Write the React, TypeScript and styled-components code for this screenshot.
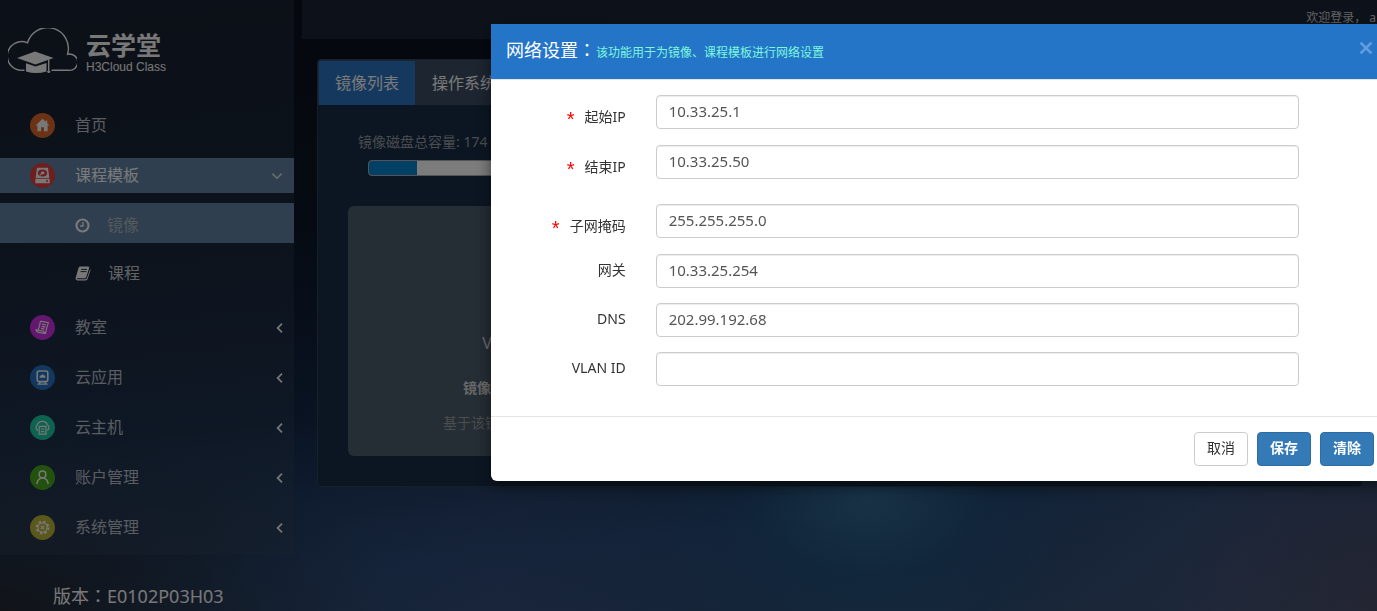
import React from "react";
import styled, { createGlobalStyle } from "styled-components";

const GlobalStyle = createGlobalStyle`
  *, *::before, *::after { box-sizing: border-box; }
  body {
    margin: 0;
    overflow: hidden;
    font-family: "Noto Sans", "Noto Sans CJK SC", sans-serif;
    font-size: 14px;
    line-height: 20px;
    background: #0c1424;
  }
  button, input { font-family: inherit; }
  ul { list-style: none; margin: 0; padding: 0; }
  h1, h2, p { margin: 0; font-weight: 400; }
`;

/* ---------- page frame ---------- */

const Page = styled.div`
  display: flex;
  align-items: flex-start;
  gap: 8px;
  min-height: 100vh;
  overflow: hidden;
  background:
    radial-gradient(ellipse 120px 80px at 63% 81%, rgba(70, 124, 160, 0.5), rgba(70, 124, 160, 0)),
    radial-gradient(ellipse 200px 200px at 63% 84%, rgba(20, 96, 140, 0.4), rgba(20, 96, 140, 0)),
    radial-gradient(ellipse 240px 220px at 102% 100%, rgba(84, 72, 92, 0.65), rgba(84, 72, 92, 0)),
    radial-gradient(ellipse 260px 300px at 90% 96%, rgba(76, 88, 124, 0.45), rgba(76, 88, 124, 0)),
    radial-gradient(ellipse 300px 240px at 36% 96%, rgba(60, 80, 130, 0.4), rgba(60, 80, 130, 0)),
    radial-gradient(ellipse 400px 180px at 0% 100%, rgba(34, 34, 38, 0.85), rgba(34, 34, 38, 0)),
    linear-gradient(174deg, #0a0f1a 0%, #0c1524 32%, #122644 60%, #24446e 80%, #324c70 100%);
`;

const SideColumn = styled.div`
  flex: 0 0 294px;
`;

const Sidebar = styled.aside`
  padding: 28px 0 10px;
  background: rgba(50, 66, 90, 0.36);
`;

const Brand = styled.div`
  display: flex;
  gap: 9px;
  padding-left: 8px;
  height: 80px;
  color: #f0f0f0;
`;

const BrandText = styled.div`
  padding-top: 4px;
`;

const BrandName = styled.div`
  font-family: "Liberation Sans", "Noto Sans CJK SC", sans-serif;
  font-size: 25px;
  line-height: 28px;
  font-weight: 700;
`;

const BrandSub = styled.div`
  font-family: "Liberation Sans", sans-serif;
  font-size: 12px;
  line-height: 14px;
`;

const Menu = styled.ul`
  display: flex;
  flex-direction: column;
  gap: 15px;
`;

const MenuLink = styled.a<{ $open?: boolean }>`
  display: flex;
  align-items: center;
  height: 35px;
  padding: 0 9px 0 30px;
  font-size: 16px;
  text-decoration: none;
  color: ${(p) => (p.$open ? "#f4f4f4" : "#b4b9c2")};
  background: ${(p) => (p.$open ? "#5f7f9f" : "transparent")};
`;

const Disc = styled.span<{ $color: string }>`
  display: flex;
  align-items: center;
  justify-content: center;
  width: 25px;
  height: 25px;
  margin-right: 20px;
  border-radius: 50%;
  background: ${(p) => p.$color};
`;

const MenuText = styled.span`
  flex: 1;
  padding-bottom: 2px;
`;

const SubMenu = styled.ul`
  display: flex;
  flex-direction: column;
  gap: 8px;
  padding: 10px 0 4px;
`;

const SubLink = styled.a<{ $active?: boolean }>`
  display: flex;
  align-items: center;
  gap: 17px;
  height: 40px;
  padding: 4px 0 0 75px;
  font-size: 16px;
  text-decoration: none;
  color: ${(p) => (p.$active ? "#aab2ba" : "#c4c6ca")};
  background: ${(p) => (p.$active ? "#5f7f9f" : "transparent")};
`;

const Version = styled.p`
  padding: 27px 0 0 53px;
  font-size: 18px;
  line-height: 28px;
  color: #f0f0f0;
`;

/* full-width punctuation centred in its square */
const Colon = styled.span`
  font-family: "Noto Sans CJK TC", sans-serif;
  line-height: 18px;
`;

const Main = styled.div`
  flex: 1;
  min-width: 0;
`;

const TopBar = styled.header`
  display: flex;
  justify-content: flex-end;
  height: 39px;
  padding: 8px 1px 0 0;
  font-size: 12px;
  color: #c8c8c8;
  background: rgba(56, 68, 92, 0.36);
`;

const Panel = styled.section`
  margin: 20px 15px 0;
  height: 428px;
  border: 1px solid #2e3e50;
  border-radius: 4px;
  overflow: hidden;
  background: #182c46;
`;

const Tabs = styled.div`
  display: flex;
  gap: 1px;
  height: 45px;
  padding: 1px 1px 0;
  background: #3a4a60;
`;

const Tab = styled.button<{ $active?: boolean }>`
  padding: 0 16px 3px;
  border: 0;
  font-size: 16px;
  color: #f4f4f4;
  background: ${(p) => (p.$active ? "#2a70bc" : "transparent")};
`;

const Capacity = styled.div`
  padding: 27px 30px 0 40px;
  color: #94989e;
`;

const Meter = styled.div`
  height: 16px;
  margin: 8px 0 0 10px;
  border: 1px solid #a4a8ac;
  border-radius: 4px;
  overflow: hidden;
  background: #f8f8f8;
`;

const MeterFill = styled.div`
  width: 48px;
  height: 100%;
  background: #0780cc;
`;

const ImageCard = styled.article`
  width: 316px;
  height: 250px;
  margin: 30px 0 0 30px;
  padding-top: 126px;
  border-radius: 6px;
  text-align: center;
  background: #4a5a6a;
`;

const CardName = styled.h2`
  font-size: 16px;
  line-height: 22px;
  color: #d4d4d4;
`;

const CardSize = styled.p`
  padding-top: 24px;
  font-weight: 700;
  color: #d0d0d0;
`;

const CardNote = styled.p`
  padding-top: 15px;
  color: #989c9e;
`;

/* ---------- dialog ---------- */

const Backdrop = styled.div`
  position: fixed;
  inset: 0;
  display: flex;
  align-items: flex-start;
  padding: 24px 0 0 491px;
  overflow: hidden;
  background: rgba(0, 0, 0, 0.5);
`;

const Dialog = styled.div`
  flex: 0 0 898px;
  border-radius: 0 0 6px 6px;
  background: #fff;
  box-shadow: 0 5px 15px rgba(0, 0, 0, 0.5);
`;

const DialogHeader = styled.header`
  display: flex;
  align-items: baseline;
  height: 56px;
  padding: 13px 16px 0 15px;
  border-bottom: 1px solid #e5e5e5;
  background: #2474c8;
`;

const DialogTitle = styled.h1`
  font-size: 18px;
  line-height: 26px;
  color: #fff;
`;

const DialogHint = styled.p`
  flex: 1;
  font-size: 12px;
  color: #7cf8dc;
`;

const CloseButton = styled.button`
  align-self: flex-start;
  padding: 5px 0 0;
  border: 0;
  background: none;
  color: #5f9ddc;

  svg { display: block; }
`;

const DialogBody = styled.div`
  padding: 15px;
`;

const FieldGroup = styled.div`
  padding-bottom: 9px;
`;

const FieldRow = styled.div`
  display: grid;
  grid-template-columns: 2fr 9fr 1fr;
  align-items: start;
  margin: 0 -15px 15px;
`;

const FieldLabel = styled.label<{ $required?: boolean }>`
  display: flex;
  justify-content: flex-end;
  height: ${(p) => (p.$required ? 35 : 34)}px;
  padding: ${(p) => (p.$required ? 12 : 6)}px 15px 0 0;
  color: #333;
`;

const Star = styled.span`
  margin-right: 10px;
  font-family: "Liberation Sans", sans-serif;
  font-size: 20px;
  line-height: 24px;
  color: #f00;
`;

const FieldCell = styled.div`
  padding: 0 15px;
`;

const TextInput = styled.input`
  display: block;
  width: 100%;
  height: 34px;
  padding: 5px 12px 7px;
  border: 1px solid #ccc;
  border-radius: 4px;
  font-size: 15px;
  line-height: 20px;
  color: #555;
  background: #fff;
  box-shadow: inset 0 1px 1px rgba(0, 0, 0, 0.075);
`;

const DialogFooter = styled.footer`
  display: flex;
  justify-content: flex-end;
  gap: 9px;
  padding: 15px;
  border-top: 1px solid #e5e5e5;
`;

const Button = styled.button<{ $primary?: boolean }>`
  width: 54px;
  height: 34px;
  padding: 0 0 4px;
  border: 1px solid ${(p) => (p.$primary ? "#2e6da4" : "#ccc")};
  border-radius: 4px;
  font-size: 14px;
  font-weight: ${(p) => (p.$primary ? 700 : 400)};
  color: ${(p) => (p.$primary ? "#fff" : "#333")};
  background: ${(p) => (p.$primary ? "#337ab7" : "#fff")};
`;

/* ---------- drawings ---------- */

const Logo = () => (
  <svg width="69" height="46" viewBox="0 0 69 46" fill="none" stroke="currentColor" strokeWidth="1.4">
    <path d="M16.5 42.3H15A14.4 14.4 0 1 1 19.5 14.8A20.7 20.7 0 0 1 59.6 26.2A8.2 8.2 0 1 1 60.5 42.3H43.5" />
    <path d="M9 30L27 23.6L45.5 30L27.5 36.4Z" fill="currentColor" stroke="none" />
    <path d="M18 35.2L27.5 38.6L38.5 35V43.6Q28 46.6 18 43.6Z" fill="currentColor" stroke="none" />
    <path d="M40.7 31.5V45M39.2 43.8H42.2" />
  </svg>
);

const iconProps = {
  width: 17,
  height: 17,
  viewBox: "0 0 17 17",
  fill: "none",
  stroke: "#f0f0f0",
  strokeWidth: 1.2,
} as const;

const HomeIcon = () => (
  <svg {...iconProps}>
    <path
      d="M8.5 1.8L1.6 8.4H3.4V14.2H7V10.2H10V14.2H13.6V8.4H15.4L13.2 6.3V3.4H11.6V4.8Z"
      fill="#f0f0f0"
      stroke="none"
    />
  </svg>
);

const DiskIcon = () => (
  <svg {...iconProps}>
    <path d="M3 .8H14L15.4 11.2H1.6ZM1.3 12H15.7V16.2H1.3Z" fill="#f0f0f0" stroke="none" />
    <ellipse cx="8.5" cy="6" rx="4.6" ry="3.5" fill="#dc3c3c" stroke="none" />
    <ellipse cx="8.7" cy="5.9" rx="1.9" ry="1.3" fill="#f0f0f0" stroke="none" />
    <path d="M5.6 8.4L8 6.4" />
    <circle cx="13" cy="14.1" r="1" fill="#dc3c3c" stroke="none" />
  </svg>
);

const ScrollIcon = () => (
  <svg {...iconProps}>
    <path d="M6.4 2.2L14.4 3.6Q12.4 9 11.6 14.4M6.4 2.2Q5.8 7 4.2 10.6M2 10.8L9.8 12.2Q9.8 14.2 11.6 14.6L4.6 13.4Q2.4 12.8 2 10.8Z" />
    <path d="M8 5.2L12 6M7.6 7.4L11.4 8.2M7 9.4L10.4 10.2" />
  </svg>
);

const ScreenIcon = () => (
  <svg {...iconProps}>
    <rect x="3.2" y="2" width="10.6" height="10.6" rx="2" strokeWidth="1.6" />
    <path d="M5.6 8.8H11.4V7.2Q10.8 6.2 10 6.4Q8.6 4.2 7.2 6.2Q5.6 6.4 5.6 7.6Z" fill="#f0f0f0" stroke="none" />
    <path d="M6.4 13L5 14.6M10.6 13L12 14.6M3.4 15.2H13.6" />
  </svg>
);

const CloudHostIcon = () => (
  <svg {...iconProps}>
    <path d="M4 11.6A3.4 3.4 0 0 1 3.4 5.8A5.2 4.6 0 0 1 13.4 5.8A3.4 3.4 0 0 1 13.2 11.6" />
    <path d="M5.2 7.4H12V15.2H5.2ZM7 10H10.2M7 12.6H10.2" />
  </svg>
);

const UserIcon = () => (
  <svg {...iconProps} strokeWidth={1.5}>
    <circle cx="8.5" cy="5.4" r="3.3" />
    <path d="M2.8 15Q3.4 9.6 8.5 8.8Q13.6 9.6 14.2 15" />
  </svg>
);

const GearIcon = () => (
  <svg {...iconProps}>
    <circle cx="8.5" cy="8.5" r="4.6" />
    <circle cx="8.5" cy="8.5" r="5.9" strokeWidth="2" strokeDasharray="2.4 2.23" />
    <path d="M6.8 6.8L10.2 10.2M10.2 6.8L6.8 10.2" />
  </svg>
);

const ClockIcon = () => (
  <svg width="15" height="15" viewBox="0 0 15 15" fill="none" stroke="#f0f0f0">
    <circle cx="7.5" cy="7.5" r="6" strokeWidth="2.2" />
    <path d="M8 4V8H5" strokeWidth="1.4" />
  </svg>
);

const BookIcon = () => (
  <svg width="16" height="15" viewBox="0 0 16 15" fill="none">
    <path
      d="M5 .6H13.4Q14.4 .8 14.2 1.8L11.2 11.2Q10.8 12.2 9.8 12.2H2.2Q1.4 12.8 2.4 13.2H10.6Q11.6 13 12 12L15 3.2Q15.8 3.6 15.4 4.6L12.6 13Q12 14.4 10.8 14.4H2.2Q.2 14 .6 12L3.6 1.8Q4 .8 5 .6Z"
      fill="#f0f0f0"
    />
    <path d="M6.2 3.4H12M5.6 5.6H11.4" stroke="#2c3440" />
  </svg>
);

const ChevronLeft = () => (
  <svg width="11" height="12" viewBox="0 0 11 12" fill="none" stroke="#e8e8e8" strokeWidth="1.8">
    <path d="M8 1.6L3.6 6L8 10.4" />
  </svg>
);

const ChevronDown = () => (
  <svg width="15" height="10" viewBox="0 0 15 10" fill="none" stroke="#d0d8e0" strokeWidth="1.6">
    <path d="M2.4 2.6L7 7.2L11.6 2.6" />
  </svg>
);

const CloseIcon = () => (
  <svg width="14" height="12" viewBox="0 0 14 12" fill="none" stroke="currentColor" strokeWidth="2.6">
    <path d="M1.5 .5L12.5 11.5M12.5 .5L1.5 11.5" />
  </svg>
);

/* ---------- content ---------- */

const sections = [
  { text: "教室", color: "#c62edc", icon: <ScrollIcon /> },
  { text: "云应用", color: "#2470c0", icon: <ScreenIcon /> },
  { text: "云主机", color: "#1cc4a0", icon: <CloudHostIcon /> },
  { text: "账户管理", color: "#44a41c", icon: <UserIcon /> },
  { text: "系统管理", color: "#b4b034", icon: <GearIcon /> },
];

type FieldProps = { id: string; label: string; value?: string; required?: boolean };

const Field = ({ id, label, value = "", required }: FieldProps) => (
  <FieldRow>
    <FieldLabel htmlFor={id} $required={required}>
      {required && <Star>*</Star>}
      {label}
    </FieldLabel>
    <FieldCell>
      <TextInput id={id} type="text" defaultValue={value} required={required} />
    </FieldCell>
  </FieldRow>
);

export default function App() {
  return (
    <>
      <GlobalStyle />
      <Page>
        <SideColumn>
          <Sidebar>
            <Brand>
              <Logo />
              <BrandText>
                <BrandName>云学堂</BrandName>
                <BrandSub>H3Cloud Class</BrandSub>
              </BrandText>
            </Brand>
            <Menu>
              <li>
                <MenuLink href="#home">
                  <Disc $color="#d8642a"><HomeIcon /></Disc>
                  <MenuText>首页</MenuText>
                </MenuLink>
              </li>
              <li>
                <MenuLink href="#templates" $open>
                  <Disc $color="#dc3c3c"><DiskIcon /></Disc>
                  <MenuText>课程模板</MenuText>
                  <ChevronDown />
                </MenuLink>
                <SubMenu>
                  <li>
                    <SubLink href="#images" $active><ClockIcon />镜像</SubLink>
                  </li>
                  <li>
                    <SubLink href="#courses"><BookIcon />课程</SubLink>
                  </li>
                </SubMenu>
              </li>
              {sections.map((s) => (
                <li key={s.text}>
                  <MenuLink href="#section">
                    <Disc $color={s.color}>{s.icon}</Disc>
                    <MenuText>{s.text}</MenuText>
                    <ChevronLeft />
                  </MenuLink>
                </li>
              ))}
            </Menu>
          </Sidebar>
          <Version>版本<Colon>：</Colon>E0102P03H03</Version>
        </SideColumn>
        <Main>
          <TopBar>
            <span>欢迎登录， a</span>
          </TopBar>
          <Panel>
            <Tabs>
              <Tab type="button" $active>镜像列表</Tab>
              <Tab type="button">操作系统</Tab>
            </Tabs>
            <Capacity>
              镜像磁盘总容量: 174 GB
              <Meter><MeterFill /></Meter>
            </Capacity>
            <ImageCard>
              <CardName>VM-01</CardName>
              <CardSize>镜像大小:40G</CardSize>
              <CardNote>基于该镜像创建课程</CardNote>
            </ImageCard>
          </Panel>
        </Main>
      </Page>

      <Backdrop>
        <Dialog role="dialog" aria-modal="true" aria-labelledby="dialog-title">
          <DialogHeader>
            <DialogTitle id="dialog-title">网络设置<Colon>：</Colon></DialogTitle>
            <DialogHint>该功能用于为镜像、课程模板进行网络设置</DialogHint>
            <CloseButton type="button" aria-label="关闭"><CloseIcon /></CloseButton>
          </DialogHeader>
          <DialogBody>
            <FieldGroup>
              <Field id="start-ip" label="起始IP" value="10.33.25.1" required />
              <Field id="end-ip" label="结束IP" value="10.33.25.50" required />
            </FieldGroup>
            <Field id="mask" label="子网掩码" value="255.255.255.0" required />
            <Field id="gateway" label="网关" value="10.33.25.254" />
            <Field id="dns" label="DNS" value="202.99.192.68" />
            <Field id="vlan" label="VLAN ID" />
          </DialogBody>
          <DialogFooter>
            <Button type="button">取消</Button>
            <Button type="button" $primary>保存</Button>
            <Button type="button" $primary>清除</Button>
          </DialogFooter>
        </Dialog>
      </Backdrop>
    </>
  );
}
